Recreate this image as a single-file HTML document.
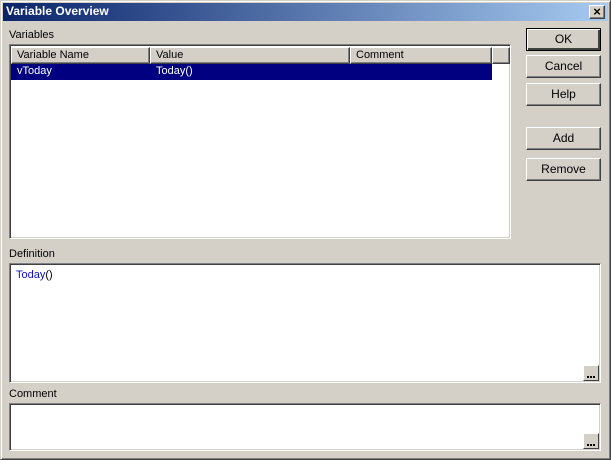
<!DOCTYPE html>
<html><head><style>
*{margin:0;padding:0;box-sizing:border-box}
body{width:611px;height:460px;background:#d4d0c8;font-family:Tahoma,"Liberation Sans",sans-serif;font-size:11px;color:#000;position:relative;overflow:hidden}
.win{position:absolute;left:0;top:0;width:611px;height:460px;border:1px solid;border-color:#d4d0c8 #404040 #404040 #d4d0c8;box-shadow:inset 1px 1px 0 #fff,inset -1px -1px 0 #808080}
.title{position:absolute;left:3px;top:3px;width:605px;height:18px;background:linear-gradient(to right,#0a246a,#a6caf0);color:#fff;font-weight:bold;font-size:12px;line-height:17px;padding-left:3px}
.x{position:absolute;left:589px;top:5px;width:16px;height:14px;background:#d4d0c8;border:1px solid;border-color:#fff #404040 #404040 #fff;box-shadow:inset -1px -1px 0 #808080;font-size:13px;font-weight:bold;text-align:center;line-height:11px;color:#000}
.lbl{position:absolute;left:9px}
.sunk{position:absolute;background:#fff;border:1px solid;border-color:#808080 #fff #fff #808080;box-shadow:inset 1px 1px 0 #404040,inset -1px -1px 0 #d4d0c8}
.hd{position:absolute;top:2px;height:17px;background:#d4d0c8;border:1px solid;border-color:#fff #404040 #404040 #fff;box-shadow:inset -1px -1px 0 #808080;line-height:15px;padding-left:5px}
.btn{position:absolute;left:526px;width:75px;height:23px;background:#d4d0c8;border:1px solid;border-color:#fff #404040 #404040 #fff;box-shadow:inset -1px -1px 0 #808080;text-align:center;line-height:20px;font-size:12px}
.ok{border:1px solid #000;box-shadow:inset 1px 1px 0 #fff,inset -2px -2px 0 #404040,inset -2px -2px 0 #808080}
.el{position:absolute;width:16px;height:16px;background:#d4d0c8;border:1px solid;border-color:#fff #404040 #404040 #fff}
.el i{position:absolute;top:10px;width:2px;height:2px;background:#000}
</style></head><body>
<div class="win"></div>
<div class="title">Variable Overview</div>
<div class="x">×</div>
<div class="lbl" style="top:29px">Variables</div>
<div class="sunk" style="left:9px;top:44px;width:502px;height:195px">
 <div class="hd" style="left:1px;width:139px">Variable Name</div>
 <div class="hd" style="left:140px;width:200px">Value</div>
 <div class="hd" style="left:340px;width:142px">Comment</div>
 <div class="hd" style="left:482px;width:18px"></div>
 <div style="position:absolute;left:1px;top:19px;width:481px;height:16px;background:#000080;color:#fff;line-height:15px">
  <span style="position:absolute;left:6px">vToday</span><span style="position:absolute;left:145px">Today()</span></div>
</div>
<div class="btn ok" style="top:28px">OK</div>
<div class="btn" style="top:55px">Cancel</div>
<div class="btn" style="top:83px">Help</div>
<div class="btn" style="top:127px">Add</div>
<div class="btn" style="top:158px">Remove</div>
<div class="lbl" style="top:248px">Definition</div>
<div class="sunk" style="left:9px;top:263px;width:592px;height:120px">
 <div style="position:absolute;left:6px;top:5px;color:#1010c0">Today<span style="color:#000">()</span></div>
 <div class="el" style="left:573px;top:101px"><i style="left:3px"></i><i style="left:6px"></i><i style="left:9px"></i></div>
</div>
<div class="lbl" style="top:388px">Comment</div>
<div class="sunk" style="left:9px;top:403px;width:592px;height:48px">
 <div class="el" style="left:573px;top:29px"><i style="left:3px"></i><i style="left:6px"></i><i style="left:9px"></i></div>
</div>
</body></html>
